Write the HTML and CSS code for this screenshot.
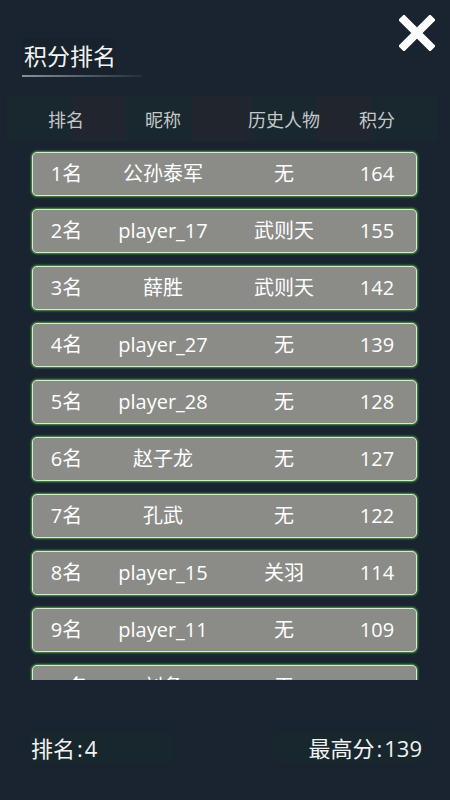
FILE: index.html
```html
<!DOCTYPE html>
<html lang="zh">
<head>
    <meta charset="UTF-8">
    <meta name="viewport" content="width=device-width, initial-scale=1.0">
    <title>积分排名</title>
    <link rel="stylesheet" href="styles.css">
</head>
<body>
    <div class="page">
        <div class="titlebar">
            <div class="title-wrap">
                <span class="title">积分排名</span>
            </div>
            <button class="close" type="button" aria-label="关闭">
                <svg width="36" height="36" viewBox="0 0 36 36">
                    <path d="M5 5 L31 31 M31 5 L5 31" stroke="#fff" stroke-width="8" stroke-linecap="square" fill="none"/>
                </svg>
            </button>
        </div>
        <div class="table-head">
            <span>排名</span>
            <span>昵称</span>
            <span>历史人物</span>
            <span>积分</span>
        </div>
        <div class="list">
            <div class="row"><span>1名</span><span>公孙泰军</span><span>无</span><span>164</span></div>
            <div class="row"><span>2名</span><span>player_17</span><span>武则天</span><span>155</span></div>
            <div class="row"><span>3名</span><span>薛胜</span><span>武则天</span><span>142</span></div>
            <div class="row"><span>4名</span><span>player_27</span><span>无</span><span>139</span></div>
            <div class="row"><span>5名</span><span>player_28</span><span>无</span><span>128</span></div>
            <div class="row"><span>6名</span><span>赵子龙</span><span>无</span><span>127</span></div>
            <div class="row"><span>7名</span><span>孔武</span><span>无</span><span>122</span></div>
            <div class="row"><span>8名</span><span>player_15</span><span>关羽</span><span>114</span></div>
            <div class="row"><span>9名</span><span>player_11</span><span>无</span><span>109</span></div>
            <div class="row"><span>10名</span><span>刘备</span><span>无</span><span>101</span></div>
        </div>
        <div class="footer">
            <div class="stat">排名<span class="colon">:</span>4</div>
            <div class="stat right">最高分<span class="colon">:</span>139</div>
        </div>
    </div>
</body>
</html>
```

FILE: styles.css
```css
body {
    margin: 0;
    background-color: #1a2431;
    font-family: "Open Sans", "Noto Sans CJK SC", sans-serif;
}
.page {
    width: 450px;
    height: 800px;
    display: flex;
    flex-direction: column;
}
.titlebar {
    position: relative;
    height: 96px;
    padding-left: 22px;
    box-sizing: border-box;
}
.title-wrap {
    display: inline-block;
    margin-top: 38px;
    width: 120px;
    position: relative;
}
.title {
    display: inline-block;
    padding-left: 2px;
    font-size: 23px;
    line-height: 37px;
    color: #f4f4f4;
    background-color: #18222c;
}
.title-wrap::after {
    content: "";
    display: block;
    height: 2px;
    background: linear-gradient(to right, #8a9096, rgba(138, 144, 150, 0.1));
}
.close {
    position: absolute;
    top: 15px;
    right: 15px;
    width: 36px;
    height: 36px;
    padding: 0;
    border: none;
    background: none;
    cursor: pointer;
}
.table-head {
    margin-left: 7px;
    width: 430px;
    height: 45px;
    box-sizing: border-box;
    padding-left: 25px;
    display: grid;
    grid-template-columns: 68px 126px 116px 70px;
    align-items: center;
    font-size: 18px;
    color: #c4c8ca;
    background: linear-gradient(to right,
        #19272f 0, #19272f 66px,
        #21252e 66px, #21252e 119px,
        #19272f 119px, #19272f 186px,
        #21252e 186px, #21252e 246px,
        #19272f 246px, #19272f 310px,
        #21252e 310px, #21252e 365px,
        #19272f 365px);
}
.table-head span,
.row span {
    text-align: center;
    white-space: nowrap;
}
.list {
    margin-top: 5px;
    height: 534px;
    box-sizing: border-box;
    padding: 6px 0 0 32px;
    overflow: hidden;
}
.row {
    width: 385px;
    height: 44px;
    box-sizing: border-box;
    margin-bottom: 13px;
    border: 1.5px solid #d4ecce;
    border-radius: 5px;
    background-color: #8b8c88;
    box-shadow: 0 0 2px 1px #4f9a47;
    display: grid;
    grid-template-columns: 67px 126px 116px 70px;
    align-items: center;
    font-size: 20px;
    line-height: 24px;
    color: #fff;
}
.footer {
    margin-top: 53px;
    padding: 0 28px 0 31px;
    display: flex;
    justify-content: space-between;
}
.stat {
    width: 142px;
    height: 30px;
    line-height: 30px;
    font-size: 22px;
    color: #f2f2f2;
    background-color: #18262e;
    white-space: nowrap;
}
.stat.right {
    width: 149px;
    text-align: right;
}
.colon {
    margin: 0 2px;
}
```
